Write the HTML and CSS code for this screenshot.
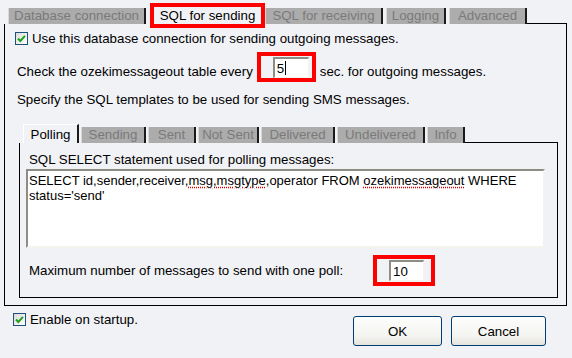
FILE: index.html
```html
<!doctype html>
<html lang="en">
  <head>
    <meta charset="UTF-8" />
    <title>SQL for sending</title>
    <link rel="stylesheet" href="styles.css">
  </head>
  <body>
    <div class="dialog">
      <div class="tabs">
        <span class="tab-gap"></span>
        <span class="tab t-db">Database connection</span>
        <span class="tab active marked">SQL for sending</span>
        <span class="tab t-recv">SQL for receiving</span>
        <span class="tab t-log">Logging</span>
        <span class="tab t-adv">Advanced</span>
        <span class="tab-fill"></span>
      </div>
      <div class="panel">
        <label class="check-row">
          <span class="checkbox"><svg viewBox="0 0 11 11" width="11" height="11"><path d="M2 5.5 L4.3 8 L9 2.8" fill="none" stroke="#21a121" stroke-width="2"/></svg></span>
          Use this database connection for sending outgoing messages.
        </label>
        <div class="field-row">
          <span class="text">Check the ozekimessageout table every</span>
          <span class="mark mark-every"><span class="input">5<span class="caret"></span></span></span>
          <span class="text">sec. for outgoing messages.</span>
        </div>
        <p class="text spec">Specify the SQL templates to be used for sending SMS messages.</p>

        <div class="inner">
          <div class="tabs small">
            <span class="tab-gap"></span>
            <span class="tab active t-poll">Polling</span>
            <span class="tab t-send">Sending</span>
            <span class="tab t-sent">Sent</span>
            <span class="tab t-notsent">Not Sent</span>
            <span class="tab t-deliv">Delivered</span>
            <span class="tab t-undeliv">Undelivered</span>
            <span class="tab t-info">Info</span>
            <span class="tab-fill"></span>
          </div>
          <div class="panel inner-panel">
            <p class="text">SQL SELECT statement used for polling messages:</p>
            <div class="memo">SELECT id,sender,receiver,<span class="spell">msg,msgtype</span>,operator FROM <span class="spell">ozekimessageout</span> WHERE<br>status='send'</div>
            <div class="field-row poll-row">
              <span class="text poll-label">Maximum number of messages to send with one poll:</span>
              <span class="mark mark-poll"><span class="input">10</span></span>
            </div>
          </div>
        </div>
      </div>

      <div class="footer">
        <label class="check-row startup">
          <span class="checkbox"><svg viewBox="0 0 11 11" width="11" height="11"><path d="M2 5.5 L4.3 8 L9 2.8" fill="none" stroke="#21a121" stroke-width="2"/></svg></span>
          Enable on startup.
        </label>
        <div class="buttons">
          <button class="btn ok">OK</button>
          <button class="btn cancel">Cancel</button>
        </div>
      </div>
    </div>
  </body>
</html>
```

FILE: styles.css
```css
* {
  box-sizing: border-box;
  margin: 0;
  padding: 0;
}

body {
  font-family: "Liberation Sans", Arial, sans-serif;
  font-size: 13.3px;
  color: #000;
  background: #f1f2f6;
  width: 572px;
  height: 358px;
  overflow: hidden;
}

.dialog {
  padding: 5px 0 0 4px;
}

/* tab strips */
.tabs {
  display: flex;
  align-items: flex-end;
  height: 19px;
  width: 563px;
}

.tab-gap {
  width: 4px;
  flex: none;
}

.tab {
  flex: none;
  height: 16px;
  line-height: 16px;
  margin-right: 3px;
  background: #acacac;
  color: #7a7a7a;
  border-left: 1px solid #d8d8d8;
  border-right: 2px solid #1a1a1a;
  text-align: center;
  white-space: nowrap;
}

.tab.active {
  height: 19px;
  line-height: 19px;
  background: #f1f2f6;
  color: #000;
  border-left: 1px solid #fff;
  border-top: 1px solid #fff;
}

.tab.marked {
  outline: 4px solid #f00;
  width: 107px;
  margin: 0 4px 0 8px;
  border: none;
  height: 17px;
  line-height: 18px;
}

.t-db { width: 138px; margin-right: 0; }
.t-recv { width: 118px; }
.t-log { width: 60px; }
.t-adv { width: 78px; margin-right: 0; }

.tab-fill {
  flex: 1;
  height: 1px;
  background: #000;
  align-self: flex-end;
}

.panel {
  width: 563px;
  height: 282px;
  border: 1px solid #000;
  border-top: none;
  padding: 8px 0 0 10px;
}

.text {
  line-height: 15px;
  white-space: nowrap;
}

.check-row {
  display: flex;
  align-items: center;
  gap: 4px;
  height: 13px;
  white-space: nowrap;
}

.checkbox {
  width: 13px;
  height: 13px;
  border: 1px solid #1c5180;
  background: linear-gradient(135deg, #dcdcd6, #fff);
  display: flex;
  align-items: center;
  justify-content: center;
  flex: none;
}

.field-row {
  display: flex;
  align-items: center;
  margin: 7px 0 0 2px;
}

.field-row .text {
  margin-top: 8px;
}

.mark {
  border: 4px solid #f00;
  display: flex;
}

.mark-every {
  padding: 1px 3px 0 12px;
  margin: 0 4px 0 4px;
}

.mark-poll {
  padding: 1px 7px 1px 12px;
  margin-left: 30px;
}

.input {
  display: flex;
  align-items: center;
  width: 36px;
  height: 21px;
  background: #fff;
  border-top: 2px solid #8d8d86;
  border-left: 2px solid #8d8d86;
  border-right: 1px solid #f4f4ee;
  border-bottom: 1px solid #f4f4ee;
  padding-left: 2px;
  line-height: 15px;
}

.caret {
  width: 1px;
  height: 14px;
  background: #000;
  margin-left: 1px;
}

.spec {
  margin: 10px 0 0 2px;
}

.inner {
  margin: 17px 0 0 4px;
}

.tabs.small {
  width: 539px;
}

.tabs.small .tab {
  margin-right: 2px;
}

.t-poll { width: 56px; }
.t-send { width: 65px; }
.t-sent { width: 48px; }
.t-notsent { width: 61px; }
.t-deliv { width: 74px; }
.t-undeliv { width: 88px; }
.tabs.small .t-info { width: 38px; margin-right: 0; }

.inner-panel {
  width: 539px;
  height: 155px;
  padding: 9px 0 0 9px;
}

.memo {
  width: 519px;
  height: 79px;
  margin: 2px 0 0 -3px;
  background: #fff;
  border-top: 2px solid #8d8d86;
  border-left: 2px solid #8d8d86;
  border-right: 2px solid #f4f4ee;
  border-bottom: 2px solid #f4f4ee;
  padding: 2px 0 0 1px;
  font-size: 13px;
  line-height: 15px;
  white-space: nowrap;
}

.spell {
  text-decoration: underline dotted #e00000;
  text-underline-offset: 2px;
}

.poll-row {
  margin: 7px 0 0 0;
}

.poll-row .text {
  margin-top: 0;
}

.poll-row .input {
  width: 35px;
}

.footer {
  display: flex;
  justify-content: space-between;
  padding: 7px 26px 0 9px;
}

.buttons {
  display: flex;
  gap: 9px;
  margin-top: 3px;
}

.btn {
  height: 30px;
  border: 1px solid #003c74;
  border-radius: 3px;
  background: linear-gradient(#fefefe, #f3f3ef 70%, #e4e3dc);
  font-family: "Liberation Sans", Arial, sans-serif;
  font-size: 13.3px;
  color: #000;
}

.ok {
  width: 89px;
}

.cancel {
  width: 95px;
}
```
